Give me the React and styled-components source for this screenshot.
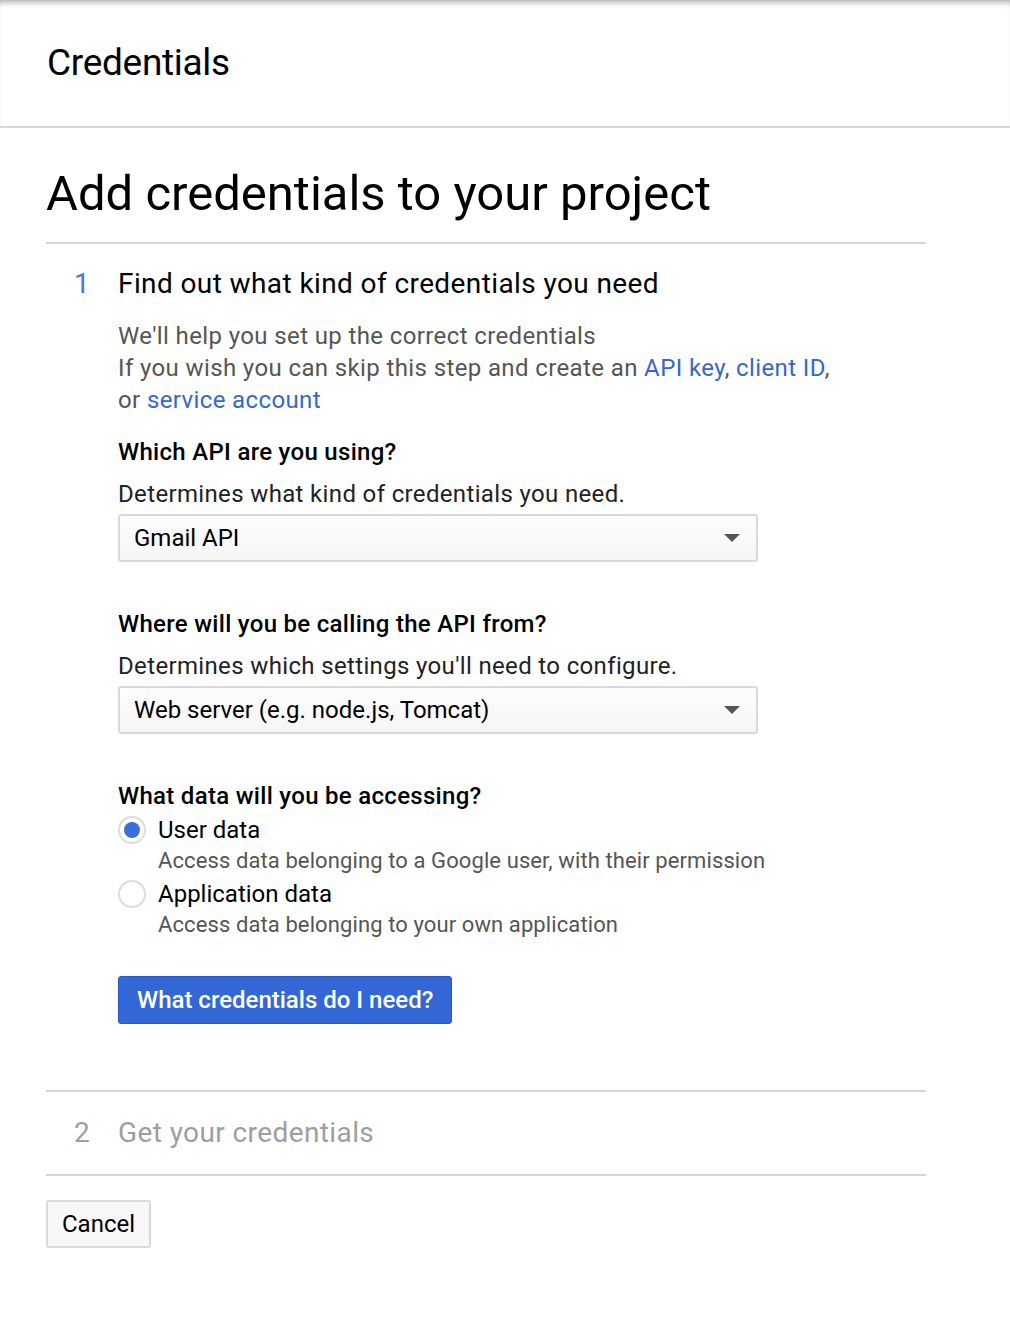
import React from "react";
import styled, { createGlobalStyle } from "styled-components";

const Global = createGlobalStyle`
  html, body { margin: 0; padding: 0; background: #fff; }
  body { font-family: Roboto, "Noto Sans", Arial, sans-serif; color: #000; }
  * { box-sizing: border-box; }
`;

const Header = styled.header`
  height: 128px;
  padding-left: 47px;
  padding-bottom: 2px;
  display: flex;
  align-items: center;
  border-bottom: 2px solid #d6d6d6;
  box-shadow: inset 0 6px 6px -4px rgba(0,0,0,0.35);
`;

const HeaderTitle = styled.h1`
  margin: 0;
  font-size: 37px;
  font-weight: 400;
  letter-spacing: -0.3px;
`;

const Main = styled.main`
  padding: 0 0 0 46px;
  width: 926px;
`;

const PageTitle = styled.h2`
  margin: 0;
  height: 116px;
  padding-top: 36px;
  font-size: 49px;
  line-height: 60px;
  font-weight: 400;
  border-bottom: 2px solid #d6d6d6;
`;

const Step = styled.section`
  display: grid;
  grid-template-columns: 72px 1fr;
  border-bottom: 2px solid #d6d6d6;
  padding: ${(p) => p.$pad};
`;

const StepNum = styled.div`
  font-size: 28px;
  line-height: 40px;
  padding-left: 28px;
  color: ${(p) => (p.$active ? "#4a76d8" : "#9e9e9e")};
`;

const StepTitle = styled.div`
  font-size: 28px;
  line-height: 40px;
  letter-spacing: 0.4px;
  color: ${(p) => (p.$active ? "#000" : "#9e9e9e")};
`;

const StepBody = styled.div`
  grid-column: 2;
`;

const Intro = styled.p`
  margin: 16px 0 0;
  font-size: 24px;
  line-height: 32px;
  letter-spacing: 0.38px;
  color: #555;
`;

const Link = styled.a`
  color: #3367d6;
  text-decoration: none;
`;

const Question = styled.div`
  margin-top: ${(p) => p.$mt || "20px"};
  font-size: 24px;
  line-height: 32px;
  font-weight: 500;
  letter-spacing: 0.3px;
  color: #000;
`;

const Hint = styled.div`
  margin-top: 10px;
  font-size: 24px;
  line-height: 32px;
  letter-spacing: 0.35px;
  color: #222;
`;

const Select = styled.div`
  margin-top: 4px;
  width: 640px;
  height: 48px;
  border: 2px solid #dadada;
  border-radius: 3px;
  background: linear-gradient(#fdfdfd, #f6f6f6);
  display: flex;
  align-items: center;
  justify-content: space-between;
  padding: 0 16px 0 14px;
  font-size: 24px;
  color: #000;
`;

const Caret = styled.span`
  width: 0;
  height: 0;
  border-left: 8px solid transparent;
  border-right: 8px solid transparent;
  border-top: 8px solid #555;
`;

const RadioRow = styled.label`
  display: grid;
  grid-template-columns: 40px 1fr;
  align-items: center;
`;

const Radio = styled.span`
  width: 28px;
  height: 28px;
  border-radius: 50%;
  border: 2px solid #dcdcdc;
  background: #fff;
  display: flex;
  align-items: center;
  justify-content: center;
  &::after {
    content: "";
    width: 16px;
    height: 16px;
    border-radius: 50%;
    background: ${(p) => (p.$checked ? "#3a6fd9" : "transparent")};
  }
`;

const RadioLabel = styled.span`
  font-size: 24px;
  line-height: 32px;
  color: #000;
`;

const RadioDesc = styled.span`
  grid-column: 2;
  font-size: 22px;
  line-height: 30px;
  letter-spacing: 0.1px;
  color: #555;
`;

const Radios = styled.div`
  margin-top: 2px;
  display: flex;
  flex-direction: column;
  gap: 2px;
`;

const Primary = styled.button`
  margin-top: 36px;
  height: 48px;
  padding: 0 18px;
  background: #3367d6;
  border: 1px solid #2a56c6;
  border-radius: 3px;
  color: #fff;
  font-family: inherit;
  font-size: 24px;
  font-weight: 500;
`;

const Cancel = styled.button`
  margin-top: 24px;
  height: 48px;
  padding: 0 14px;
  background: #f8f8f8;
  border: 2px solid #dadada;
  border-radius: 3px;
  color: #000;
  font-family: inherit;
  font-size: 24px;
`;

export default function App() {
  return (
    <>
      <Global />
      <Header>
        <HeaderTitle>Credentials</HeaderTitle>
      </Header>
      <Main>
        <PageTitle>Add credentials to your project</PageTitle>
        <Step $pad="20px 0 66px">
          <StepNum $active>1</StepNum>
          <StepTitle $active>Find out what kind of credentials you need</StepTitle>
          <StepBody>
            <Intro>
              We'll help you set up the correct credentials
              <br />
              If you wish you can skip this step and create an <Link href="#">API key</Link>,{" "}
              <Link href="#">client ID</Link>,
              <br />
              or <Link href="#">service account</Link>
            </Intro>
            <Question $mt="20px">Which API are you using?</Question>
            <Hint>Determines what kind of credentials you need.</Hint>
            <Select>
              <span>Gmail API</span>
              <Caret />
            </Select>
            <Question $mt="46px">Where will you be calling the API from?</Question>
            <Hint>Determines which settings you'll need to configure.</Hint>
            <Select>
              <span>Web server (e.g. node.js, Tomcat)</span>
              <Caret />
            </Select>
            <Question $mt="46px">What data will you be accessing?</Question>
            <Radios>
              <RadioRow>
                <Radio $checked />
                <RadioLabel>User data</RadioLabel>
                <RadioDesc>Access data belonging to a Google user, with their permission</RadioDesc>
              </RadioRow>
              <RadioRow>
                <Radio />
                <RadioLabel>Application data</RadioLabel>
                <RadioDesc>Access data belonging to your own application</RadioDesc>
              </RadioRow>
            </Radios>
            <Primary>What credentials do I need?</Primary>
          </StepBody>
        </Step>
        <Step $pad="21px 0 21px">
          <StepNum>2</StepNum>
          <StepTitle>Get your credentials</StepTitle>
        </Step>
        <Cancel>Cancel</Cancel>
      </Main>
    </>
  );
}
